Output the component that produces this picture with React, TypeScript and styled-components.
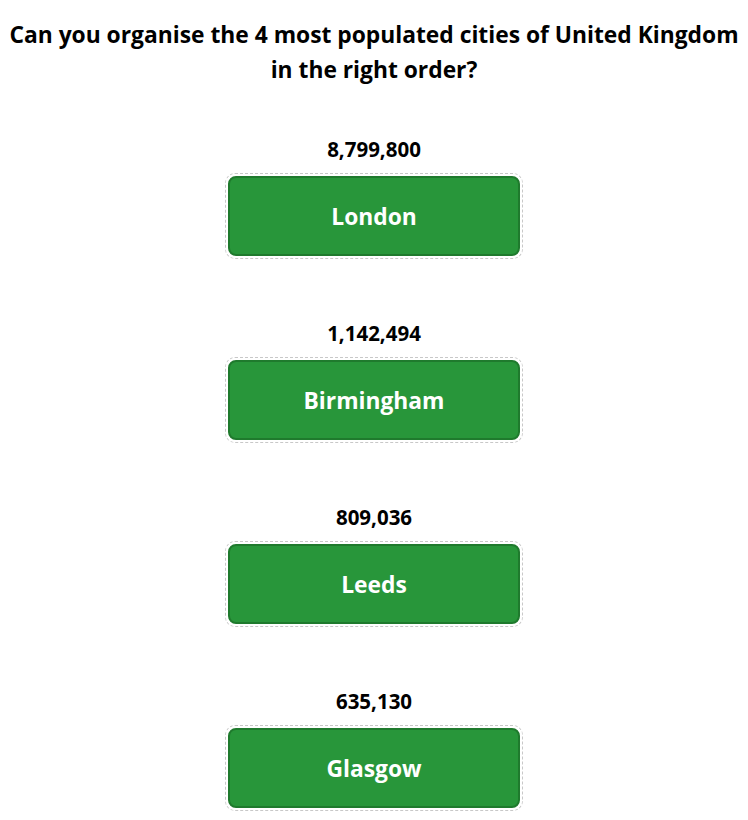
import styled, { createGlobalStyle } from 'styled-components';

const GlobalStyle = createGlobalStyle`
  body {
    margin: 0;
    background: #ffffff;
    font-family: "Open Sans", "Noto Sans", "Liberation Sans", sans-serif;
    color: #000000;
  }
`;

const Page = styled.div`
  display: flex;
  flex-direction: column;
  align-items: center;
  padding-top: 17px;
`;

const Title = styled.h2`
  margin: 0;
  width: 740px;
  text-align: center;
  font-size: 22.8px;
  font-weight: 700;
  line-height: 35px;
`;

const CityList = styled.ol`
  list-style: none;
  margin: 48px 0 0;
  padding: 0;
  display: flex;
  flex-direction: column;
  align-items: center;
  gap: 60px;
`;

const Item = styled.li`
  display: flex;
  flex-direction: column;
  align-items: center;
  gap: 10px;
`;

const Population = styled.span`
  font-size: 20.5px;
  font-weight: 700;
  line-height: 28px;
`;

const Slot = styled.div`
  box-sizing: border-box;
  width: 298px;
  height: 86px;
  padding: 2px;
  border: 1px dashed #c8c8c8;
  border-radius: 10px;
`;

const CityCard = styled.div`
  box-sizing: border-box;
  height: 100%;
  display: flex;
  align-items: center;
  justify-content: center;
  background: #28963a;
  border: 2px solid #1f7a2d;
  border-radius: 8px;
  color: #ffffff;
  font-size: 22.8px;
  font-weight: 700;
`;

const cities = [
  { name: 'London', population: 8799800 },
  { name: 'Birmingham', population: 1142494 },
  { name: 'Leeds', population: 809036 },
  { name: 'Glasgow', population: 635130 },
];

const App = () => {
  return (
    <>
      <GlobalStyle />
      <Page>
        <Title>
          Can you organise the 4 most populated cities of United Kingdom in the
          right order?
        </Title>
        <CityList>
          {cities.map((city) => (
            <Item key={city.name}>
              <Population>{city.population.toLocaleString('en-GB')}</Population>
              <Slot>
                <CityCard>{city.name}</CityCard>
              </Slot>
            </Item>
          ))}
        </CityList>
      </Page>
    </>
  );
};

export default App;
